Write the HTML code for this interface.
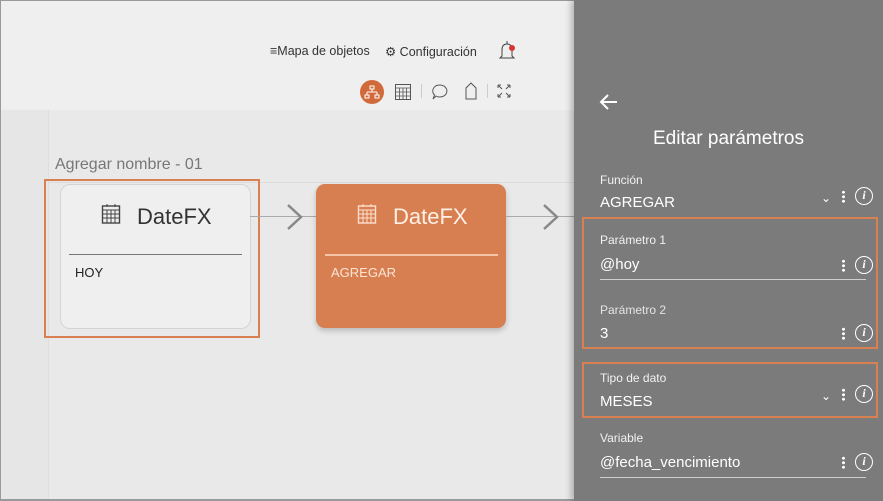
<!DOCTYPE html>
<html><head><meta charset="utf-8"><style>
*{margin:0;padding:0;box-sizing:border-box}
body{width:883px;height:501px;overflow:hidden;position:relative;font-family:"Liberation Sans",sans-serif;background:#e6e6e6}
.abs{position:absolute}
.hdr{left:0;top:0;width:883px;height:110px;background:#efefef}
.panel{left:574px;top:0;width:309px;height:501px;background:#7b7b7b;box-shadow:-3px 0 6px rgba(0,0,0,.25);color:#fff}
.lbl{font-size:12px;color:#f2f2f2}
.val{font-size:15px;color:#fff}
.dots{width:3px;height:13px;background:radial-gradient(circle,#fff 1.4px,transparent 1.6px) 0 0/3px 4.5px repeat-y}
.info{width:18px;height:18px;border:1.5px solid #fff;border-radius:50%;font:italic bold 12px "Liberation Serif",serif;text-align:center;line-height:15px;color:#fff}
.uline{height:1px;background:#cfcfcf}
.obox{border:2px solid #d98052}
</style></head><body>
<div class="abs hdr"></div>
<div class="abs" style="left:48px;top:110px;width:526px;height:391px;background:#e9e9e9;border-left:1px solid #dedede"></div>
<div class="abs" style="left:0;top:0;width:1px;height:501px;background:#999"></div>
<div class="abs" style="left:0;top:0;width:883px;height:1px;background:#999"></div>
<div class="abs" style="left:0;top:499px;width:883px;height:2px;background:#999"></div>
<div class="abs" style="left:270px;top:44px;font-size:12.5px;color:#333">≡Mapa de objetos</div>
<div class="abs" style="left:385px;top:44px;font-size:12.5px;color:#333">⚙ Configuración</div>
<svg class="abs" style="left:496px;top:40px" width="22" height="24"><path d="M4 18 L6 16 L6 10 Q6 4 11 4 Q16 4 16 10 L16 16 L18 18 Z" fill="none" stroke="#444" stroke-width="1"/><line x1="11" y1="1" x2="11" y2="4" stroke="#444"/><circle cx="16" cy="8" r="3" fill="#d33"/></svg>
<div class="abs" style="left:360px;top:80px;width:24px;height:24px;border-radius:50%;background:#d06a3a"></div>
<svg class="abs" style="left:364px;top:84px" width="16" height="16"><rect x="6" y="2" width="4" height="3" fill="none" stroke="#fff"/><path d="M8 5V8M3 8H13M3 8V11M13 8V11" stroke="#fff" fill="none"/><rect x="1" y="11" width="4" height="3" fill="none" stroke="#fff"/><rect x="11" y="11" width="4" height="3" fill="none" stroke="#fff"/></svg>
<svg class="abs" style="left:394px;top:83px" width="18" height="18"><rect x="1.5" y="1.5" width="15" height="15" fill="none" stroke="#555"/><path d="M1.5 5H16.5M1.5 9H16.5M1.5 13H16.5M5.5 5V16.5M9 5V16.5M12.5 5V16.5" stroke="#555" stroke-width=".8"/></svg>
<div class="abs" style="left:421px;top:84px;width:1px;height:14px;background:#ccc"></div>
<svg class="abs" style="left:431px;top:83px" width="18" height="18"><path d="M9 2A7 6 0 1 1 5 13L2 16L3.5 12A7 6 0 0 1 9 2Z" fill="none" stroke="#555"/></svg>
<svg class="abs" style="left:464px;top:82px" width="14" height="18"><path d="M2 17V6L7 1L12 6V17Z" fill="none" stroke="#555"/></svg>
<div class="abs" style="left:487px;top:84px;width:1px;height:14px;background:#ccc"></div>
<svg class="abs" style="left:496px;top:83px" width="16" height="16"><path d="M2 2L6 6M14 2L10 6M2 14L6 10M14 14L10 10M2 2H5M2 2V5M14 2H11M14 2V5M2 14H5M2 14V11M14 14H11M14 14V11" stroke="#555" fill="none"/></svg>
<div class="abs" style="left:55px;top:156px;font-size:16px;color:#777">Agregar nombre - 01</div>
<div class="abs" style="left:48px;top:182px;width:526px;height:1px;background:#dcdcdc"></div>
<div class="abs obox" style="left:44px;top:179px;width:216px;height:159px"></div>
<div class="abs" style="left:60px;top:184px;width:191px;height:145px;background:#efefef;border:1px solid #d4d4d4;border-radius:10px"></div>
<svg class="abs" style="left:101px;top:203px" width="20" height="22"><rect x="1.5" y="3" width="17" height="17" fill="none" stroke="#444" stroke-width="1.4"/><path d="M1.5 7H18.5M1.5 11H18.5M1.5 15H18.5M6 7V20M10 7V20M14 7V20M6 1V4M14 1V4" stroke="#444"/></svg>
<div class="abs" style="left:137px;top:204px;font-size:22px;color:#333">DateFX</div>
<div class="abs" style="left:69px;top:254px;width:173px;height:1px;background:#777"></div>
<div class="abs" style="left:75px;top:265px;font-size:13px;color:#222">HOY</div>
<div class="abs" style="left:250px;top:216px;width:66px;height:1px;background:#aaa"></div>
<svg class="abs" style="left:285px;top:203px" width="20" height="28"><path d="M3 2L16 14L3 26" fill="none" stroke="#888" stroke-width="2.5"/></svg>
<div class="abs" style="left:316px;top:184px;width:190px;height:144px;background:#d87f52;border-radius:9px;box-shadow:0 3px 6px rgba(0,0,0,.2)"></div>
<svg class="abs" style="left:357px;top:203px" width="20" height="22"><rect x="1.5" y="3" width="17" height="17" fill="none" stroke="#fde0cc" stroke-width="1.4"/><path d="M1.5 7H18.5M1.5 11H18.5M1.5 15H18.5M6 7V20M10 7V20M14 7V20M6 1V4M14 1V4" stroke="#fde0cc"/></svg>
<div class="abs" style="left:393px;top:204px;font-size:22px;color:#fff0e6">DateFX</div>
<div class="abs" style="left:325px;top:254px;width:173px;height:2px;background:#f4c4a6"></div>
<div class="abs" style="left:331px;top:265px;font-size:13px;color:#fde4d4">AGREGAR</div>
<div class="abs" style="left:506px;top:216px;width:68px;height:1px;background:#aaa"></div>
<svg class="abs" style="left:541px;top:203px" width="20" height="28"><path d="M3 2L16 14L3 26" fill="none" stroke="#888" stroke-width="2.5"/></svg>

<div class="abs panel">
<svg class="abs" style="left:25px;top:93px" width="20" height="18"><path d="M18 9H3M9 2L2 9L9 16" fill="none" stroke="#fff" stroke-width="2"/></svg>
<div class="abs" style="left:0;top:128px;width:309px;text-align:center;font-size:19px">Editar parámetros</div>
<div class="abs lbl" style="left:26px;top:173px">Función</div>
<div class="abs val" style="left:26px;top:194px">AGREGAR</div>
<div class="abs" style="left:247px;top:191px;font-size:12px">⌄</div>
<div class="abs dots" style="left:268px;top:190px"></div>
<div class="abs info" style="left:281px;top:187px">i</div>
<div class="abs obox" style="left:8px;top:217px;width:296px;height:132px"></div>
<div class="abs lbl" style="left:26px;top:233px">Parámetro 1</div>
<div class="abs val" style="left:26px;top:256px">@hoy</div>
<div class="abs dots" style="left:268px;top:259px"></div>
<div class="abs info" style="left:281px;top:256px">i</div>
<div class="abs uline" style="left:26px;top:279px;width:266px"></div>
<div class="abs lbl" style="left:26px;top:303px;color:#e4e4e4">Parámetro 2</div>
<div class="abs val" style="left:26px;top:325px">3</div>
<div class="abs dots" style="left:268px;top:327px"></div>
<div class="abs info" style="left:281px;top:324px">i</div>
<div class="abs obox" style="left:8px;top:362px;width:296px;height:56px"></div>
<div class="abs lbl" style="left:26px;top:371px">Tipo de dato</div>
<div class="abs val" style="left:26px;top:393px">MESES</div>
<div class="abs" style="left:247px;top:389px;font-size:12px">⌄</div>
<div class="abs dots" style="left:268px;top:388px"></div>
<div class="abs info" style="left:281px;top:385px">i</div>
<div class="abs lbl" style="left:26px;top:431px">Variable</div>
<div class="abs val" style="left:26px;top:454px">@fecha_vencimiento</div>
<div class="abs dots" style="left:268px;top:456px"></div>
<div class="abs info" style="left:281px;top:453px">i</div>
<div class="abs uline" style="left:26px;top:477px;width:266px"></div>
</div>
</body></html>
